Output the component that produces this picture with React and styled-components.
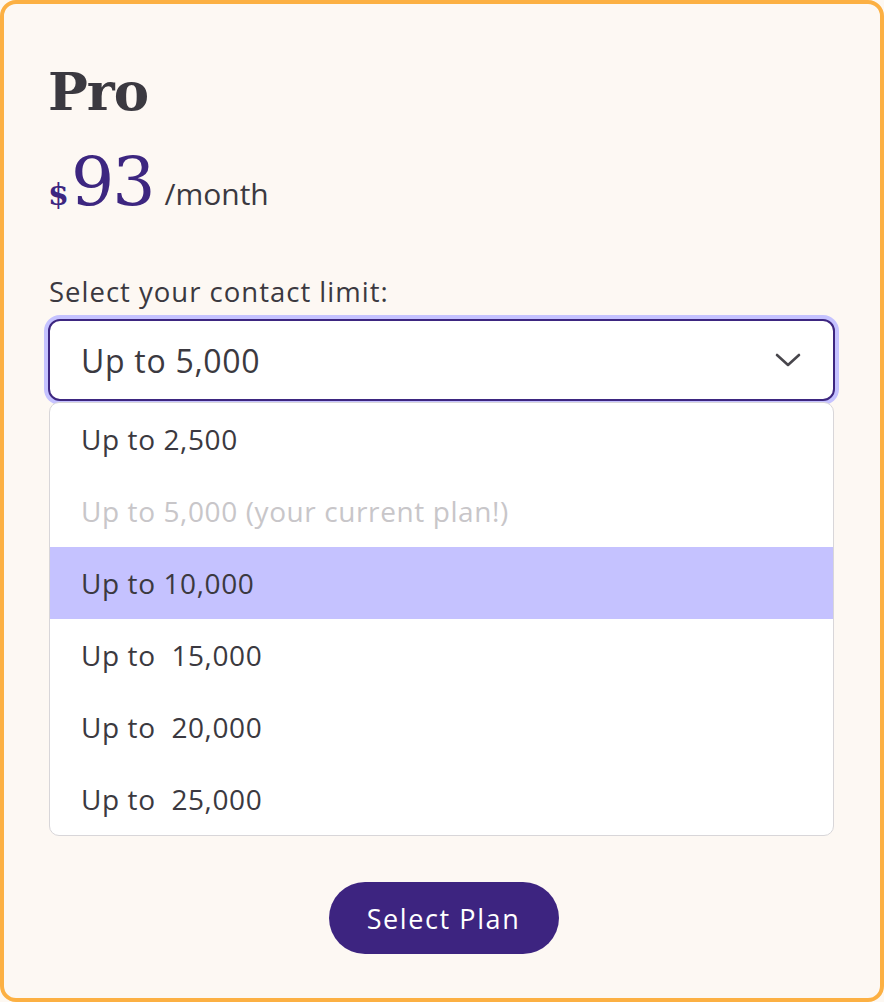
import React from "react";
import styled, { createGlobalStyle } from "styled-components";

const Global = createGlobalStyle`
  html, body { margin: 0; padding: 0; }
  body { font-family: "Open Sans", "DejaVu Sans", sans-serif; background: #fdf8f2; }
  * { box-sizing: border-box; }
`;

const Card = styled.div`
  width: 884px;
  height: 1002px;
  border: 4px solid #fcb043;
  border-radius: 16px;
  background: #fdf8f3;
  padding: 51px 45px 0 44px;
  display: flex;
  flex-direction: column;
  color: #3b3940;
`;

const Title = styled.h1`
  margin: 0;
  font-family: "DejaVu Serif", "Liberation Serif", serif;
  font-weight: 700;
  font-size: 53px;
  line-height: 72px;
  color: #3b3940;
  letter-spacing: -1px;
`;

const PriceRow = styled.div`
  display: flex;
  align-items: baseline;
  margin-top: 15px;
  height: 70px;
`;

const Currency = styled.span`
  font-family: "DejaVu Serif", serif;
  font-weight: 700;
  font-size: 30px;
  color: #3d2680;
`;

const Amount = styled.span`
  font-family: "DejaVu Serif", "Liberation Serif", serif;
  font-size: 68px;
  color: #3d2680;
  letter-spacing: -2px;
  margin-left: 2px;
`;

const Period = styled.span`
  font-size: 30px;
  margin-left: 11px;
  color: #3b3940;
`;

const Label = styled.div`
  margin-top: 62px;
  font-size: 27.5px;
  line-height: 36px;
  letter-spacing: 1px;
  margin-left: 1px;
`;

const Field = styled.div`
  margin-top: 9px;
  height: 82px;
  border: 2px solid #3d2680;
  border-radius: 12px;
  background: #fff;
  box-shadow: 0 0 0 4px #c5c2ff;
  display: flex;
  align-items: center;
  justify-content: space-between;
  padding: 0 32px 0 31px;
  font-size: 32px;
  letter-spacing: 0.7px;
`;

const List = styled.ul`
  list-style: none;
  margin: 1px 1px 0 1px;
  padding: 0;
  background: #fff;
  border: 1px solid #d8d6d9;
  border-radius: 10px;
  overflow: hidden;
`;

const Item = styled.li`
  height: 72px;
  display: flex;
  align-items: center;
  padding-left: 31px;
  font-size: 28px;
  letter-spacing: 0.6px;
  white-space: pre;
  color: ${(p) => (p.$disabled ? "#c8c6c9" : "#3b3940")};
  background: ${(p) => (p.$active ? "#c5c2ff" : "transparent")};
`;

const Footer = styled.div`
  display: flex;
  justify-content: center;
  margin-top: 46px;
`;

const Button = styled.button`
  width: 230px;
  height: 72px;
  border: none;
  border-radius: 36px;
  background: #3d2480;
  color: #fff;
  font-family: "Open Sans", "DejaVu Sans", sans-serif;
  font-size: 27px;
  letter-spacing: 1.6px;
  margin-left: 4px;
  padding: 0;
`;

const options = [
  { label: "Up to 2,500" },
  { label: "Up to 5,000 (your current plan!)", disabled: true },
  { label: "Up to 10,000", active: true },
  { label: "Up to  15,000" },
  { label: "Up to  20,000" },
  { label: "Up to  25,000" },
];

export default function App() {
  return (
    <>
      <Global />
      <Card>
        <Title>Pro</Title>
        <PriceRow>
          <Currency>$</Currency>
          <Amount>93</Amount>
          <Period>/month</Period>
        </PriceRow>
        <Label>Select your contact limit:</Label>
        <Field>
          <span>Up to 5,000</span>
          <svg width="26" height="16" viewBox="0 0 26 16" fill="none">
            <path d="M2 3 L13 13 L24 3" stroke="#48464c" strokeWidth="2.6" strokeLinecap="round" strokeLinejoin="round" />
          </svg>
        </Field>
        <List>
          {options.map((o) => (
            <Item key={o.label} $disabled={o.disabled} $active={o.active}>
              {o.label}
            </Item>
          ))}
        </List>
        <Footer>
          <Button>Select Plan</Button>
        </Footer>
      </Card>
    </>
  );
}
